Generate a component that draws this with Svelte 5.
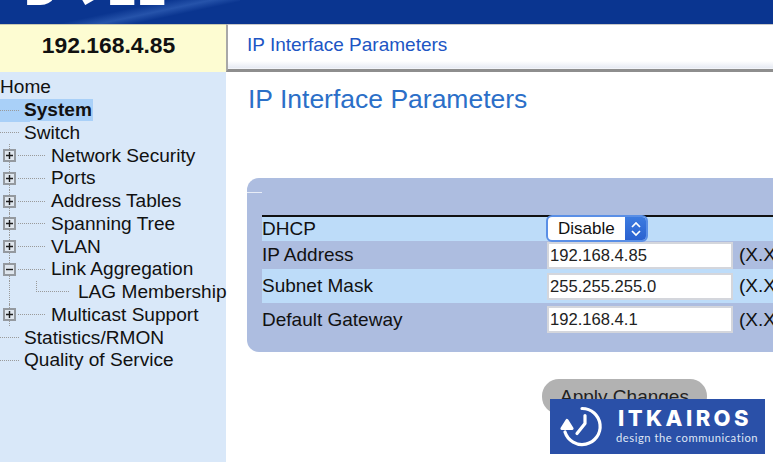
<script>
  const tree = [
    { label: 'Home', level: 0 },
    { label: 'System', level: 1, active: true },
    { label: 'Switch', level: 1 },
    { label: 'Network Security', level: 2, box: '+' },
    { label: 'Ports', level: 2, box: '+' },
    { label: 'Address Tables', level: 2, box: '+' },
    { label: 'Spanning Tree', level: 2, box: '+' },
    { label: 'VLAN', level: 2, box: '+' },
    { label: 'Link Aggregation', level: 2, box: '-' },
    { label: 'LAG Membership', level: 3 },
    { label: 'Multicast Support', level: 2, box: '+' },
    { label: 'Statistics/RMON', level: 1 },
    { label: 'Quality of Service', level: 1 }
  ];
</script>

<div class="page">
  <header class="banner">
    <div class="logo"><span class="d">D</span><span class="tilt">E</span><span class="l">L</span><span class="l">L</span></div>
  </header>

  <div class="strip">
    <div class="address">192.168.4.85</div>
    <div class="tab">IP Interface Parameters</div>
  </div>

  <div class="body">
    <nav class="tree">
      {#each tree as item}
        <div class="row l{item.level}" class:boxed={item.box}>
          {#if item.level === 3}
            <span class="elbow"></span>
          {/if}
          {#if item.box}
            <span class="box">
              <svg width="13" height="13" viewBox="0 0 13 13">
                <rect x="1" y="1" width="11" height="11" fill="#dfe6ee" stroke="#94999f" stroke-width="2" />
                <path d={item.box === '+' ? 'M3 6.5h7M6.5 3v7' : 'M3 6.5h7'} stroke="#1c1c1c" stroke-width="1.4" />
              </svg>
            </span>
          {/if}
          {#if item.level === 1 || item.level === 2}
            <span class="dots"></span>
          {/if}
          <span class="label" class:active={item.active}>{item.label}</span>
        </div>
      {/each}
    </nav>

    <main class="main">
      <h1>IP Interface Parameters</h1>

      <section class="panel">
        <div class="notch"></div>
        <div class="table">
          <div class="line light dhcp">
            <span class="name">DHCP</span>
            <div class="select">
              <span class="value">Disable</span>
              <span class="arrows">
                <svg width="12" height="18" viewBox="0 0 12 18" fill="none" stroke="#fff" stroke-width="1.7">
                  <path d="M2 7l4-4 4 4M2 11l4 4 4-4" />
                </svg>
              </span>
            </div>
          </div>
          <div class="line ip">
            <span class="name">IP Address</span>
            <div class="input">192.168.4.85</div>
            <span class="hint">(X.X.X.X)</span>
          </div>
          <div class="line light mask">
            <span class="name">Subnet Mask</span>
            <div class="input">255.255.255.0</div>
            <span class="hint">(X.X.X.X)</span>
          </div>
          <div class="line gateway">
            <span class="name">Default Gateway</span>
            <div class="input">192.168.4.1</div>
            <span class="hint">(X.X.X.X)</span>
          </div>
        </div>
      </section>

      <div class="actions"><button type="button">Apply Changes</button></div>
    </main>
  </div>

  <aside class="watermark">
    <svg class="mark" width="48" height="48" viewBox="0 0 48 48" fill="none" stroke="#fff" stroke-width="3.2" stroke-linecap="round" stroke-linejoin="round">
      <path d="M23 5.5A18 18 0 1 1 6 29" />
      <path d="M3 25.5l5-8 5 8z" fill="#fff" />
      <path d="M26 12.5v8l-8 10" />
    </svg>
    <div class="brand">
      <div class="wordmark">ITKAIROS</div>
      <div class="tagline">design the communication</div>
    </div>
  </aside>
</div>

<style>
  :global(body) { margin: 0; background: #fff; }
  .page {
    position: relative;
    width: 773px;
    height: 462px;
    overflow: hidden;
    font-family: "Liberation Sans", Arial, sans-serif;
    color: #111;
    background: #fff;
  }
  .banner {
    height: 24px;
    overflow: hidden;
    background:
      linear-gradient(168deg, transparent 48%, rgba(90,140,220,.35) 60%, transparent 70%) 0 0 / 240px 24px no-repeat,
      #0a3590;
  }
  .logo {
    display: flex;
    margin: -32px 0 0 24px;
    height: 42px;
    color: #fff;
    font-size: 47px;
    line-height: 42px;
    font-weight: 700;
    filter: blur(.5px);
  }
  .logo .d { width: 40px; }
  .logo .l { width: 30px; }
  .logo .tilt {
    width: 43px;
    padding-left: 18px;
    box-sizing: border-box;
    transform: rotate(-30deg);
    transform-origin: 21px 37px;
  }

  .strip { display: flex; height: 48px; }
  .address {
    width: 226px;
    background: #fdfcd2;
    border-top: 1px solid #c9c9b0;
    box-sizing: border-box;
    font-size: 22.9px;
    font-weight: 700;
    line-height: 41px;
    text-align: center;
    padding-right: 9px;
    color: #111;
  }
  .tab {
    flex: 1;
    box-sizing: border-box;
    padding-left: 19px;
    line-height: 39px;
    font-size: 19px;
    color: #2055c4;
    background: linear-gradient(#fff 0 36px, #e6eaf3 43px, #fff 44px);
    border-left: 2px solid #a8a8a8;
    border-bottom: 3px solid #8e8e8e;
    border-top: 1px solid #c8c8c8;
  }

  .body { display: flex; height: 390px; }
  .tree {
    width: 226px;
    flex: none;
    background: #d9e8f9;
    padding-top: 4px;
    box-sizing: border-box;
  }
  .row {
    position: relative;
    display: flex;
    align-items: center;
    height: 22.75px;
    font-size: 19.1px;
    white-space: nowrap;
  }
  .row.boxed::before,
  .row.l3::before {
    content: "";
    position: absolute;
    left: 9px;
    top: 0;
    bottom: 0;
    border-left: 1px dotted #9a9a9a;
  }
  .row.l1 { padding-left: 0; }
  .row.l1 .dots { width: 19px; margin-right: 5px; }
  .row.l2 { padding-left: 3px; }
  .row.l2 .dots { width: 27px; margin-left: 2px; margin-right: 6px; }
  .row.l3 { padding-left: 35px; }
  .dots { border-top: 1px dotted #9a9a9a; flex: none; }
  .elbow {
    width: 33px;
    height: 11px;
    margin: -12px 9px 0 1px;
    border-left: 1px dotted #9a9a9a;
    border-bottom: 1px dotted #9a9a9a;
    box-sizing: border-box;
    flex: none;
  }
  .box { position: relative; display: flex; width: 13px; height: 13px; flex: none; }
  .label.active {
    font-weight: 700;
    background: #a9d0f8;
    padding: 0 1px 0 0;
    line-height: 22px;
  }
  .row.l1:has(.active) { background: linear-gradient(#a9d0f8, #a9d0f8) 0 0 / 30px 100% no-repeat; }

  .main { flex: 1; min-width: 0; padding-left: 22px; }
  h1 {
    margin: 11px 0 0;
    font-size: 26.5px;
    line-height: 32px;
    font-weight: 400;
    color: #2b6fc8;
    white-space: nowrap;
  }
  .panel {
    position: relative;
    margin: 63px 0 0 -1px;
    width: 560px;
    height: 174px;
    box-sizing: border-box;
    padding: 37px 0 0 15px;
    background: #adbde0;
    border-radius: 12px;
    overflow: hidden;
  }
  .notch {
    position: absolute;
    left: 0;
    top: 14px;
    width: 15px;
    height: 1px;
    background: #e8edf7;
  }
  .table { border-top: 2px solid #111; }
  .line {
    display: flex;
    align-items: center;
    font-size: 19px;
    white-space: nowrap;
  }
  .light { background: #bddcf9; }
  .dhcp { height: 24px; }
  .ip { height: 28px; }
  .mask { height: 34px; }
  .gateway { height: 33px; }
  .name { width: 285px; flex: none; padding-bottom: 0; }
  .input {
    width: 186px;
    height: 27px;
    box-sizing: border-box;
    flex: none;
    background: #fff;
    border: 2px solid #d4d6dc;
    padding-left: 1px;
    font-size: 16.6px;
    line-height: 23.5px;
    color: #222;
  }
  .hint { margin-left: 6px; font-size: 19px; color: #111; }
  .select {
    display: flex;
    box-sizing: border-box;
    width: 102px;
    height: 27px;
    margin: -2px 0 -1px -1px;
    flex: none;
    border: 2px solid #5a8fe6;
    border-radius: 6px;
    background: #fff;
    overflow: hidden;
    font-size: 17px;
    line-height: 24px;
  }
  .value { flex: 1; padding-left: 10px; }
  .arrows {
    width: 21px;
    display: flex;
    align-items: center;
    justify-content: center;
    background: linear-gradient(#3c7be0, #2a62d0);
  }

  .actions { margin: 27px 0 0 -1px; padding-left: 17px; }
  button {
    display: block;
    width: 165px;
    height: 35px;
    margin-left: 278px;
    padding: 0;
    border: 0;
    border-radius: 17px;
    background: #b2b2b2;
    font: 19px "Liberation Sans", Arial, sans-serif;
    color: #222;
  }

  .watermark {
    position: absolute;
    left: 550px;
    top: 399px;
    width: 215px;
    height: 55px;
    display: flex;
    align-items: center;
    box-sizing: border-box;
    padding-left: 9px;
    background: #2a50a8;
    color: #fff;
  }
  .mark { flex: none; }
  .brand { margin-left: 9px; flex: none; white-space: nowrap; padding-bottom: 3px; }
  .wordmark {
    font-family: Inter, "Liberation Sans", sans-serif;
    font-size: 22px;
    font-weight: 800;
    letter-spacing: 3.4px;
    line-height: 24px;
    padding-left: 2px;
  }
  .tagline {
    font-family: Lato, "Liberation Sans", sans-serif;
    font-size: 11.2px;
    letter-spacing: .55px;
    line-height: 15px;
    color: #dfe6f5;
  }
</style>
